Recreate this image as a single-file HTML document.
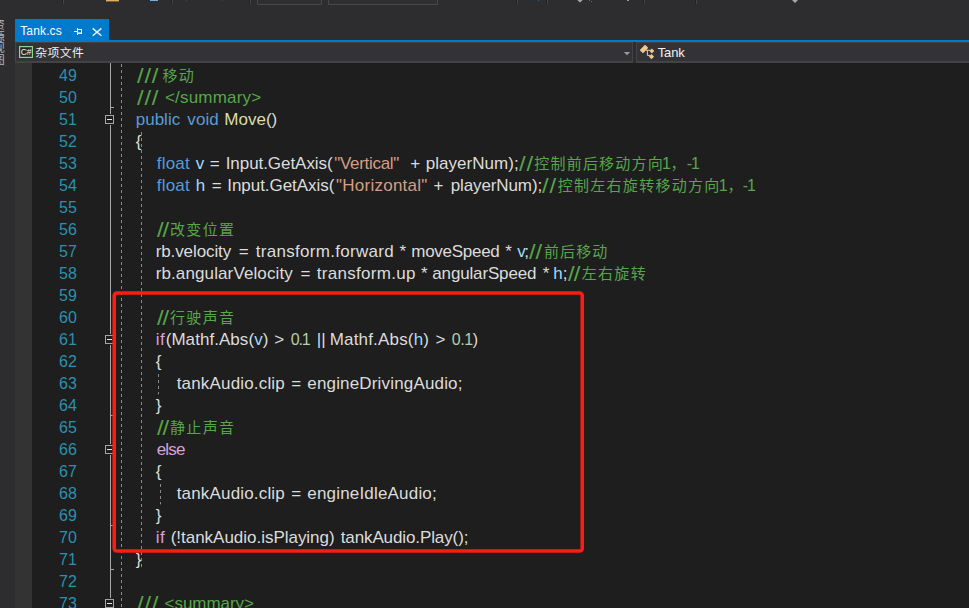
<!DOCTYPE html>
<html lang="zh-CN">
<head>
<meta charset="utf-8">
<title>Tank.cs</title>
<style>
html,body{margin:0;padding:0;}
body{width:969px;height:608px;overflow:hidden;position:relative;background:#2d2d30;
 font-family:"Liberation Sans","Noto Sans CJK SC",sans-serif;}
#top{position:absolute;left:0;top:0;width:969px;height:42px;background:#2d2d30;}
#tab{position:absolute;left:15px;top:19px;width:94px;height:22px;background:#007acc;}
#tabline{position:absolute;left:15px;top:40px;width:954px;height:2px;background:#007acc;}
#tabtxt{position:absolute;left:20.2px;top:22.5px;font-size:12px;line-height:16px;color:#ffffff;white-space:pre;letter-spacing:0.15px;}
.nv{position:absolute;top:42px;height:18px;background:#333337;border:1px solid #434346;border-bottom-width:2px;}
#nav1{left:15px;width:616px;}
#nav2{left:636px;width:332px;border-right-width:0;}
.nt{position:absolute;white-space:pre;color:#f1f1f1;}
#csbg{position:absolute;left:20px;top:47px;width:12px;height:10px;background:#28282b;}
#cs{left:20.8px;top:47px;font-size:8.5px;line-height:10px;color:#f4f4f4;letter-spacing:-0.2px;}
#misc{left:35.3px;top:44px;font-size:11.8px;letter-spacing:0.45px;line-height:16px;font-family:"Noto Sans CJK SC","Liberation Sans",sans-serif;}
#cls{left:657.7px;top:44.7px;font-size:13px;line-height:16px;letter-spacing:-0.1px;}
#vt{position:absolute;left:-9px;top:19px;width:13px;writing-mode:vertical-rl;font-size:11.5px;line-height:11.5px;color:#b4b4b4;white-space:pre;font-family:"Noto Sans CJK SC",sans-serif;}
#editor{position:absolute;left:15px;top:63px;width:954px;height:545px;background:#1e1e1e;}
#ind{position:absolute;left:15px;top:63px;width:17px;height:545px;background:#333333;}
#side{position:absolute;left:0;top:0;width:15px;height:608px;background:#2d2d30;overflow:hidden;}
.t{position:absolute;white-space:pre;font-size:17.0px;line-height:22px;height:22px;font-family:"Liberation Sans","Noto Sans CJK SC",sans-serif;}
.c{font-size:15.0px;font-family:"Noto Sans CJK SC","Liberation Sans",sans-serif;}
.n{font-size:16px;}
.s{transform:scale(1.4,1.2);transform-origin:0 4.5px;}
.ln{position:absolute;left:32px;width:44.7px;margin-top:1px;text-align:right;font-size:16px;line-height:22px;height:22px;color:#2b91af;letter-spacing:-0.1px;white-space:pre;}
#ov{position:absolute;left:0;top:0;}
</style>
</head>
<body>
<div id="top"></div>
<div id="side"><div id="vt">资源视图</div></div>
<div id="tab"></div>
<div id="tabline"></div>
<div id="tabtxt">Tank.cs</div>
<div id="nav1" class="nv"></div>
<div id="nav2" class="nv"></div>
<div id="csbg"></div>
<div id="cs" class="nt">C#</div>
<div id="misc" class="nt">杂项文件</div>
<div id="cls" class="nt">Tank</div>
<div id="editor"></div>
<div id="ind"></div>
<!--GUTTER-->
<span class="ln" style="top:64px">49</span>
<span class="ln" style="top:86px">50</span>
<span class="ln" style="top:108px">51</span>
<span class="ln" style="top:130px">52</span>
<span class="ln" style="top:152px">53</span>
<span class="ln" style="top:174px">54</span>
<span class="ln" style="top:196px">55</span>
<span class="ln" style="top:218px">56</span>
<span class="ln" style="top:240px">57</span>
<span class="ln" style="top:262px">58</span>
<span class="ln" style="top:284px">59</span>
<span class="ln" style="top:306px">60</span>
<span class="ln" style="top:328px">61</span>
<span class="ln" style="top:350px">62</span>
<span class="ln" style="top:372px">63</span>
<span class="ln" style="top:394px">64</span>
<span class="ln" style="top:416px">65</span>
<span class="ln" style="top:438px">66</span>
<span class="ln" style="top:460px">67</span>
<span class="ln" style="top:482px">68</span>
<span class="ln" style="top:504px">69</span>
<span class="ln" style="top:526px">70</span>
<span class="ln" style="top:548px">71</span>
<span class="ln" style="top:570px">72</span>
<span class="ln" style="top:592px">73</span>
<!--CODE-->
<span class="t s" style="left:137.00px;top:65px;color:#57a64a;letter-spacing:0.545px;">///</span>
<span class="t c" style="left:162.50px;top:64px;color:#57a64a;letter-spacing:1.250px;">移动</span>
<span class="t s" style="left:137.00px;top:87px;color:#57a64a;letter-spacing:0.545px;">///</span>
<span class="t" style="left:165.00px;top:87px;color:#57a64a;letter-spacing:0.190px;">&lt;/summary&gt;</span>
<span class="t" style="left:135.70px;top:109px;color:#569cd6;letter-spacing:0.017px;">public</span>
<span class="t" style="left:187.30px;top:109px;color:#569cd6;letter-spacing:0.090px;">void</span>
<span class="t" style="left:224.30px;top:109px;letter-spacing:0.014px;"><span style="color:#dcdcaa">Move</span><span style="color:#dcdcdc">()</span></span>
<span class="t" style="left:135.65px;top:131px;color:#dcdcdc;">{</span>
<span class="t" style="left:156.70px;top:153px;color:#569cd6;letter-spacing:0.223px;">float</span>
<span class="t" style="left:195.85px;top:153px;color:#9cdcfe;">v</span>
<span class="t" style="left:209.65px;top:153px;color:#dcdcdc;">=</span>
<span class="t" style="left:225.70px;top:153px;color:#dcdcdc;letter-spacing:-0.058px;">Input.GetAxis(</span>
<span class="t" style="left:334.30px;top:153px;color:#d69d85;letter-spacing:-0.309px;">"Vertical"</span>
<span class="t" style="left:410.35px;top:153px;color:#dcdcdc;">+</span>
<span class="t" style="left:425.70px;top:153px;color:#dcdcdc;letter-spacing:0.044px;">playerNum);</span>
<span class="t s" style="left:518.90px;top:153px;color:#57a64a;letter-spacing:0.563px;">//</span>
<span class="t c" style="left:534.30px;top:152px;color:#57a64a;letter-spacing:1.200px;">控制前后移动方向</span>
<span class="t n" style="left:662.00px;top:153px;color:#57a64a;">1</span>
<span class="t c" style="left:670.50px;top:152px;color:#57a64a;">，</span>
<span class="t n" style="left:686.70px;top:153px;color:#57a64a;letter-spacing:-1.028px;">-1</span>
<span class="t" style="left:156.70px;top:175px;color:#569cd6;letter-spacing:0.223px;">float</span>
<span class="t" style="left:195.85px;top:175px;color:#9cdcfe;">h</span>
<span class="t" style="left:211.70px;top:175px;color:#dcdcdc;">=</span>
<span class="t" style="left:227.30px;top:175px;color:#dcdcdc;letter-spacing:-0.050px;">Input.GetAxis(</span>
<span class="t" style="left:336.00px;top:175px;color:#d69d85;letter-spacing:0.248px;">"Horizontal"</span>
<span class="t" style="left:433.50px;top:175px;color:#dcdcdc;">+</span>
<span class="t" style="left:450.70px;top:175px;color:#dcdcdc;letter-spacing:-0.106px;">playerNum);</span>
<span class="t s" style="left:542.30px;top:175px;color:#57a64a;letter-spacing:0.563px;">//</span>
<span class="t c" style="left:557.70px;top:174px;color:#57a64a;letter-spacing:1.289px;">控制左右旋转移动方向</span>
<span class="t n" style="left:718.85px;top:175px;color:#57a64a;">1</span>
<span class="t c" style="left:727.50px;top:174px;color:#57a64a;">，</span>
<span class="t n" style="left:742.70px;top:175px;color:#57a64a;letter-spacing:-1.028px;">-1</span>
<span class="t s" style="left:156.70px;top:219px;color:#57a64a;letter-spacing:-0.723px;">//</span>
<span class="t c" style="left:170.00px;top:218px;color:#57a64a;letter-spacing:1.333px;">改变位置</span>
<span class="t" style="left:155.70px;top:241px;color:#dcdcdc;letter-spacing:-0.102px;">rb.velocity</span>
<span class="t" style="left:238.80px;top:241px;color:#dcdcdc;">=</span>
<span class="t" style="left:255.70px;top:241px;color:#dcdcdc;letter-spacing:0.303px;">transform.forward</span>
<span class="t" style="left:399.50px;top:241px;color:#dcdcdc;">*</span>
<span class="t" style="left:411.30px;top:241px;color:#dcdcdc;letter-spacing:-0.284px;">moveSpeed</span>
<span class="t" style="left:505.35px;top:241px;color:#dcdcdc;">*</span>
<span class="t" style="left:517.30px;top:241px;letter-spacing:-1.500px;"><span style="color:#9cdcfe">v</span><span style="color:#dcdcdc">;</span></span>
<span class="t s" style="left:529.30px;top:241px;color:#57a64a;letter-spacing:-0.152px;">//</span>
<span class="t c" style="left:544.00px;top:240px;color:#57a64a;letter-spacing:1.100px;">前后移动</span>
<span class="t" style="left:155.70px;top:263px;color:#dcdcdc;letter-spacing:0.115px;">rb.angularVelocity</span>
<span class="t" style="left:300.50px;top:263px;color:#dcdcdc;">=</span>
<span class="t" style="left:316.70px;top:263px;color:#dcdcdc;letter-spacing:0.303px;">transform.up</span>
<span class="t" style="left:421.00px;top:263px;color:#dcdcdc;">*</span>
<span class="t" style="left:432.30px;top:263px;color:#dcdcdc;letter-spacing:-0.156px;">angularSpeed</span>
<span class="t" style="left:542.65px;top:263px;color:#dcdcdc;">*</span>
<span class="t" style="left:553.30px;top:263px;letter-spacing:-0.055px;"><span style="color:#9cdcfe">h</span><span style="color:#dcdcdc">;</span></span>
<span class="t s" style="left:568.30px;top:263px;color:#57a64a;letter-spacing:-0.652px;">//</span>
<span class="t c" style="left:581.70px;top:262px;color:#57a64a;letter-spacing:1.333px;">左右旋转</span>
<span class="t s" style="left:156.70px;top:307px;color:#57a64a;letter-spacing:-0.723px;">//</span>
<span class="t c" style="left:170.00px;top:306px;color:#57a64a;letter-spacing:1.333px;">行驶声音</span>
<span class="t" style="left:155.70px;top:329px;color:#d8a0df;letter-spacing:0.523px;">if</span>
<span class="t" style="left:165.70px;top:329px;letter-spacing:0.054px;"><span style="color:#dcdcdc">(Mathf.Abs(</span><span style="color:#9cdcfe">v</span><span style="color:#dcdcdc">)</span></span>
<span class="t" style="left:274.15px;top:329px;color:#dcdcdc;">&gt;</span>
<span class="t n" style="left:290.70px;top:329px;color:#b5cea8;letter-spacing:-1.172px;">0.1</span>
<span class="t" style="left:316.70px;top:329px;color:#dcdcdc;letter-spacing:0.184px;">||</span>
<span class="t" style="left:329.70px;top:329px;letter-spacing:0.177px;"><span style="color:#dcdcdc">Mathf.Abs(</span><span style="color:#9cdcfe">h</span><span style="color:#dcdcdc">)</span></span>
<span class="t" style="left:435.50px;top:329px;color:#dcdcdc;">&gt;</span>
<span class="t n" style="left:451.70px;top:329px;letter-spacing:-0.414px;"><span style="color:#b5cea8">0.1</span><span style="color:#dcdcdc">)</span></span>
<span class="t" style="left:155.65px;top:351px;color:#dcdcdc;">{</span>
<span class="t" style="left:176.70px;top:373px;color:#dcdcdc;letter-spacing:0.170px;">tankAudio.clip</span>
<span class="t" style="left:291.20px;top:373px;color:#dcdcdc;">=</span>
<span class="t" style="left:307.30px;top:373px;color:#dcdcdc;letter-spacing:0.165px;">engineDrivingAudio;</span>
<span class="t" style="left:155.65px;top:395px;color:#dcdcdc;">}</span>
<span class="t s" style="left:156.70px;top:417px;color:#57a64a;letter-spacing:-0.723px;">//</span>
<span class="t c" style="left:170.00px;top:416px;color:#57a64a;letter-spacing:1.333px;">静止声音</span>
<span class="t" style="left:156.70px;top:439px;color:#d8a0df;letter-spacing:-0.810px;">else</span>
<span class="t" style="left:155.65px;top:461px;color:#dcdcdc;">{</span>
<span class="t" style="left:176.70px;top:483px;color:#dcdcdc;letter-spacing:0.170px;">tankAudio.clip</span>
<span class="t" style="left:291.20px;top:483px;color:#dcdcdc;">=</span>
<span class="t" style="left:307.30px;top:483px;color:#dcdcdc;letter-spacing:0.184px;">engineIdleAudio;</span>
<span class="t" style="left:155.65px;top:505px;color:#dcdcdc;">}</span>
<span class="t" style="left:155.70px;top:527px;color:#d8a0df;letter-spacing:0.523px;">if</span>
<span class="t" style="left:170.70px;top:527px;color:#dcdcdc;letter-spacing:-0.022px;">(!tankAudio.isPlaying)</span>
<span class="t" style="left:340.70px;top:527px;color:#dcdcdc;letter-spacing:-0.108px;">tankAudio.Play();</span>
<span class="t" style="left:135.65px;top:549px;color:#dcdcdc;">}</span>
<span class="t s" style="left:137.00px;top:593px;color:#57a64a;letter-spacing:0.545px;">///</span>
<span class="t" style="left:164.60px;top:593px;color:#57a64a;letter-spacing:-0.053px;">&lt;summary&gt;</span>
<svg id="ov" width="969" height="608" viewBox="0 0 969 608">
<rect x="62" y="0" width="1" height="4" fill="#222224"/><rect x="63" y="0" width="1" height="4" fill="#46464a"/>
<rect x="171" y="0" width="1" height="4" fill="#222224"/><rect x="172" y="0" width="1" height="4" fill="#46464a"/>
<rect x="249" y="0" width="1" height="4" fill="#222224"/><rect x="250" y="0" width="1" height="4" fill="#46464a"/>
<rect x="516" y="0" width="1" height="4" fill="#222224"/><rect x="517" y="0" width="1" height="4" fill="#46464a"/>
<rect x="546" y="0" width="1" height="4" fill="#222224"/><rect x="547" y="0" width="1" height="4" fill="#46464a"/>
<rect x="643" y="0" width="1" height="4" fill="#222224"/><rect x="644" y="0" width="1" height="4" fill="#46464a"/>
<rect x="695" y="0" width="1" height="4" fill="#222224"/><rect x="696" y="0" width="1" height="4" fill="#46464a"/>
<rect x="106" y="0" width="13" height="1.4" fill="#e2ae62"/>
<rect x="150" y="0" width="8" height="0.9" fill="#79c0ff"/>
<rect x="186" y="0" width="1" height="0.6" fill="#5a5a5e"/><rect x="222" y="0" width="1" height="0.6" fill="#5a5a5e"/>
<rect x="538" y="0" width="1" height="0.7" fill="#2f7fc0"/>
<rect x="627" y="0" width="2" height="0.7" fill="#c8c8c8"/>
<path d="M257.5 0V4.5H321.5V0" fill="#2f2f32" stroke="#48484c" stroke-width="1"/>
<path d="M328.5 0V4.5H437.5V0" fill="#2f2f32" stroke="#48484c" stroke-width="1"/>
<path d="M577.3 0H582.7L580 2.6Z" fill="#a8a8a8"/>
<path d="M792 0H798L795 3Z" fill="#a8a8a8"/>
<rect x="589" y="0" width="1" height="1" fill="#6a6a6a"/><rect x="591" y="1" width="1" height="1" fill="#6a6a6a"/>
<g fill="#e6f2fb"><rect x="74" y="31" width="3" height="1"/><rect x="77" y="28" width="1" height="7"/><rect x="78" y="29" width="4" height="1"/><rect x="81" y="29" width="1" height="5"/><rect x="78" y="32.4" width="4" height="1.6"/></g>
<path d="M92.7 28.4L101.4 35.7M101.4 28.4L92.7 35.7" fill="none" stroke="#e6f2fb" stroke-width="1.5"/>
<rect x="19.6" y="46.6" width="12.8" height="10.8" fill="none" stroke="#8ed48c" stroke-width="1.2"/>
<path d="M623.8 52H630.2L627 55.3Z" fill="#999999"/>
<g fill="#efc88d" stroke="none"><rect x="-3.75" y="-2.3" width="7.5" height="4.6" rx="0.5" transform="translate(644 49) rotate(-45)"/><rect x="-1.75" y="-1.75" width="3.5" height="3.5" rx="0.3" transform="translate(651.9 50.9) rotate(45)"/><rect x="-1.9" y="-1.9" width="3.8" height="3.8" rx="0.3" transform="translate(651.5 56.6) rotate(45)"/></g><path d="M646 50.3H650.5M647.4 50.3V55.4H650" fill="none" stroke="#efc88d" stroke-width="1"/>
<rect x="110" y="63" width="1" height="545" fill="#a5a5a5"/>
<rect x="111" y="107" width="3" height="1" fill="#a5a5a5"/>
<rect x="111" y="415" width="3" height="1" fill="#a5a5a5"/>
<rect x="111" y="525" width="3" height="1" fill="#a5a5a5"/>
<rect x="111" y="569" width="3" height="1" fill="#a5a5a5"/>
<line x1="121.5" y1="63" x2="121.5" y2="608" stroke="#8a8a8a" stroke-width="1" stroke-dasharray="3 3" stroke-dashoffset="5"/>
<line x1="141.5" y1="132" x2="141.5" y2="567" stroke="#8a8a8a" stroke-width="1" stroke-dasharray="3 3" stroke-dashoffset="0"/>
<line x1="158.5" y1="374" x2="158.5" y2="394.4" stroke="#8a8a8a" stroke-width="1" stroke-dasharray="3 3" stroke-dashoffset="0"/>
<line x1="160.5" y1="484" x2="160.5" y2="504.4" stroke="#8a8a8a" stroke-width="1" stroke-dasharray="3 3" stroke-dashoffset="0"/>
<rect x="110" y="114" width="1" height="11" fill="#1e1e1e"/><rect x="105.5" y="115.5" width="8" height="8" fill="#1e1e1e" stroke="#a5a5a5" stroke-width="1"/><rect x="107" y="119" width="5" height="1" fill="#e6e6e6"/>
<rect x="110" y="334" width="1" height="11" fill="#1e1e1e"/><rect x="105.5" y="335.5" width="8" height="8" fill="#1e1e1e" stroke="#a5a5a5" stroke-width="1"/><rect x="107" y="339" width="5" height="1" fill="#e6e6e6"/>
<rect x="110" y="444" width="1" height="11" fill="#1e1e1e"/><rect x="105.5" y="445.5" width="8" height="8" fill="#1e1e1e" stroke="#a5a5a5" stroke-width="1"/><rect x="107" y="449" width="5" height="1" fill="#e6e6e6"/>
<rect x="110" y="598" width="1" height="11" fill="#1e1e1e"/><rect x="105.5" y="599.5" width="8" height="8" fill="#1e1e1e" stroke="#a5a5a5" stroke-width="1"/><rect x="107" y="603" width="5" height="1" fill="#e6e6e6"/>
<rect x="114.25" y="293" width="468" height="258" rx="2.5" ry="2.5" fill="none" stroke="#f91d13" stroke-width="3.6"/>
</svg>
</body>
</html>
